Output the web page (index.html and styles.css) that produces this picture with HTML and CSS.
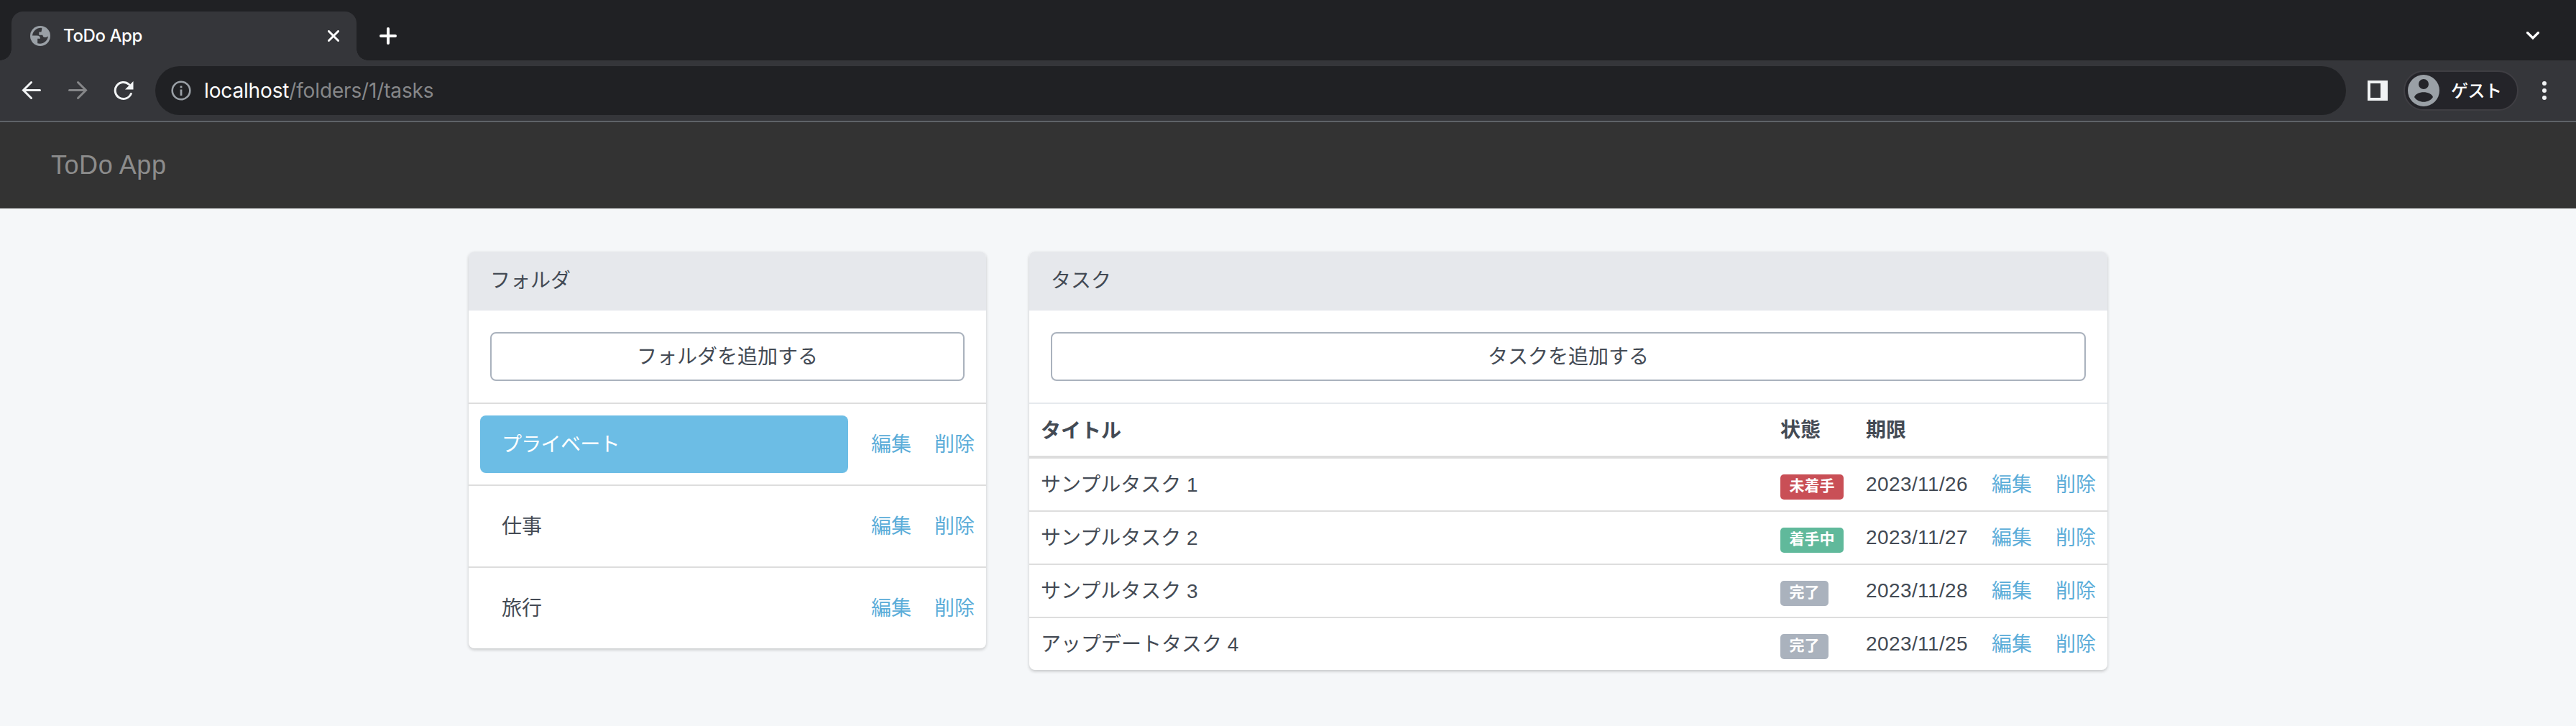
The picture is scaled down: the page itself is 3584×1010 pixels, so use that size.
FILE: index.html
```html
<!DOCTYPE html>
<html lang="ja">
<head>
<meta charset="utf-8">
<title>ToDo App</title>
<link rel="stylesheet" href="styles.css">
</head>
<body>
<header class="browser">
  <div class="tabstrip">
    <div class="tab">
      <svg class="globe" width="28" height="28" viewBox="0 0 28 28"><circle cx="14" cy="14" r="14" fill="#9aa0a6"/><path d="M16.300 3C10 2 4 6.500 3 13.500h6.500c3 0 4.500 1.500 4.500 4.300h-3.800v6.500c7 2 14-2.500 14.800-10-1 1.300-2.500 1.700-4 1.700-2.500 0-3.500-1.300-3.700-3.300h-5V8.500h3.200c.2-2 .8-2.500.8-5.500z" fill="#35363a"/></svg>
      <span class="tab-title">ToDo App</span>
      <svg class="close" width="16" height="16" viewBox="0 0 16 16"><path d="M1.500 1.500l13 13M14.500 1.500l-13 13" stroke="#fff" stroke-width="3" stroke-linecap="round"/></svg>
    </div>
    <svg class="plus" width="24" height="24" viewBox="0 0 24 24"><path d="M12 2v20M2 12h20" stroke="#fff" stroke-width="4" stroke-linecap="round"/></svg>
    <svg class="chevron" width="18" height="12" viewBox="0 0 18 12"><path d="M1.500 1.500L9 9l7.500-7.500" fill="none" stroke="#fff" stroke-width="3.200" stroke-linecap="round"/></svg>
  </div>
  <div class="toolbar">
    <svg class="nav-icon" width="28" height="28" viewBox="0 0 28 28"><path d="M25.500 13.500H3M13.500 2.500l-11 11 11 11" fill="none" stroke="#f1f3f4" stroke-width="3" stroke-linecap="round"/></svg>
    <svg class="nav-icon" width="28" height="28" viewBox="0 0 28 28"><path d="M2.500 13.500H25M14.500 2.500l11 11-11 11" fill="none" stroke="#868789" stroke-width="3" stroke-linecap="round"/></svg>
    <svg class="nav-icon" width="28" height="28" viewBox="0 0 28 28"><path d="M24.300 18.500A11.500 11.500 0 1 1 21.500 5.500" fill="none" stroke="#f1f3f4" stroke-width="3" stroke-linecap="round"/><path d="M27.500 1v11.500H16z" fill="#f1f3f4"/></svg>
    <div class="omnibox">
      <svg width="28" height="28" viewBox="0 0 28 28"><circle cx="14" cy="14" r="12.300" fill="none" stroke="#9aa0a6" stroke-width="2.600"/><path d="M12.600 12.500h2.800V21h-2.800zM12.600 7.500h2.800v2.800h-2.800z" fill="#9aa0a6"/></svg>
      <span class="url"><span class="host">localhost</span>/folders/1/tasks</span>
    </div>
    <svg class="panel-icon" width="28" height="28" viewBox="0 0 28 28"><path d="M0 0h28v28H0zM4 4v20h14V4z" fill="#f1f3f4" fill-rule="evenodd"/></svg>
    <div class="profile">
      <svg width="44" height="44" viewBox="0 0 44 44"><circle cx="22" cy="22" r="22" fill="#9aa0a6"/><circle cx="22" cy="13" r="7" fill="#242429"/><path d="M9 31c3-9 23-9 26 0-5 9-21 9-26 0z" fill="#242429"/></svg>
      <span>ゲスト</span>
    </div>
    <svg class="menu" width="6" height="26" viewBox="0 0 6 26"><g fill="#f1f3f4"><circle cx="3" cy="3" r="3"/><circle cx="3" cy="13" r="3"/><circle cx="3" cy="23" r="3"/></g></svg>
  </div>
</header>
<nav class="navbar"><a class="brand">ToDo App</a></nav>
<main class="container">
  <section class="panel folders">
    <h2 class="panel-heading">フォルダ</h2>
    <div class="panel-body"><a class="btn">フォルダを追加する</a></div>
    <div class="folder-row"><a class="folder active">プライベート</a><a class="link">編集</a><a class="link">削除</a></div>
    <div class="folder-row"><a class="folder">仕事</a><a class="link">編集</a><a class="link">削除</a></div>
    <div class="folder-row"><a class="folder">旅行</a><a class="link">編集</a><a class="link">削除</a></div>
  </section>
  <section class="panel tasks">
    <h2 class="panel-heading">タスク</h2>
    <div class="panel-body"><a class="btn">タスクを追加する</a></div>
    <div class="task-row head"><span>タイトル</span><span>状態</span><span>期限</span></div>
    <div class="task-row"><span>サンプルタスク 1</span><span><b class="label danger">未着手</b></span><span class="date">2023/11/26</span><a class="link">編集</a><a class="link">削除</a></div>
    <div class="task-row"><span>サンプルタスク 2</span><span><b class="label success">着手中</b></span><span class="date">2023/11/27</span><a class="link">編集</a><a class="link">削除</a></div>
    <div class="task-row"><span>サンプルタスク 3</span><span><b class="label">完了</b></span><span class="date">2023/11/28</span><a class="link">編集</a><a class="link">削除</a></div>
    <div class="task-row"><span>アップデートタスク 4</span><span><b class="label">完了</b></span><span class="date">2023/11/25</span><a class="link">編集</a><a class="link">削除</a></div>
  </section>
</main>
</body>
</html>
```

FILE: styles.css
```css
* { box-sizing: border-box; }
body {
  margin: 0;
  height: 1010px;
  overflow: hidden;
  background: #f5f7f9;
  color: #434a54;
  font: 28px/40px "Liberation Sans", "Noto Sans CJK JP", sans-serif;
}
svg { display: block; flex: none; }

.browser { height: 170px; background: #35363a; border-bottom: 2px solid #5f6368; font-family: Inter, "Noto Sans CJK JP", sans-serif; }
.tabstrip { height: 84px; background: #202124; display: flex; align-items: center; padding: 16px 48px 0 16px; }
.tab {
  position: relative;
  width: 480px;
  height: 68px;
  padding: 0 24px 0 26px;
  display: flex;
  align-items: center;
  background: #35363a;
  border-radius: 16px 16px 0 0;
}
.tab::before, .tab::after { content: ""; position: absolute; bottom: 0; width: 16px; height: 16px; }
.tab::before { left: -16px; background: radial-gradient(circle at 0 0, #202124 15.5px, #35363a 16px); }
.tab::after { right: -16px; background: radial-gradient(circle at 100% 0, #202124 15.5px, #35363a 16px); }
.tab-title { margin-left: 18px; color: #fff; font-size: 24px; font-weight: 500; letter-spacing: -.4px; flex: 1; }
.plus { margin-left: 32px; }
.chevron { margin-left: auto; margin-right: 3px; }

.toolbar { height: 84px; display: flex; align-items: center; padding: 0 41px 0 30px; }
.nav-icon { margin-right: 36px; }
.omnibox { flex: 1; margin-left: -6px; height: 68px; border-radius: 34px; background: #202124; display: flex; align-items: center; padding-left: 22px; }
.url { margin-left: 18px; font-size: 28px; color: #868789; letter-spacing: -.15px; }
.host { color: #fff; }
.panel-icon { margin-left: 30px; }
.profile { margin-left: 22px; width: 160px; height: 56px; border: 2px solid #3f3e43; border-radius: 28px; background: #242429; display: flex; align-items: center; padding-left: 4px; color: #fff; font-size: 24px; font-weight: 500; letter-spacing: -.5px; }
.profile span { margin-left: 16px; padding-top: 2px; }
.menu { margin-left: 33px; }

.navbar { height: 120px; background: #333; padding: 40px 71px; }
.brand { display: block; font-size: 36px; line-height: 40px; letter-spacing: .55px; color: #8c8c8c; }

.container { display: flex; align-items: flex-start; gap: 60px; width: 2280px; margin: 60px auto 0; }
.panel { background: #fff; border-radius: 8px; box-shadow: 0 2px 4px rgba(0, 0, 0, .2); overflow: hidden; }
.folders { width: 720px; }
.tasks { width: 1500px; }
.panel-heading { margin: 0; height: 82px; padding: 21px 30px 19px; background: #e6e8ec; font-size: 28px; font-weight: 400; }
.panel-body { padding: 30px; }
.btn { display: block; height: 68px; border: 2px solid #aab2bd; border-radius: 8px; text-align: center; line-height: 66px; }
.link { color: #5badd9; padding-top: 2px; }

.folder-row { height: 114px; border-top: 2px solid #ddd; display: flex; align-items: center; padding: 0 16px; }
.folder { flex: 1; height: 80px; line-height: 82px; padding-left: 30px; border-radius: 8px; }
.active { background: #6cbde5; color: #fff; letter-spacing: -.7px; }
.folder-row .link { margin-left: 32px; }

.task-row { height: 74px; border-top: 2px solid #ddd; display: grid; grid-template-columns: 1029px 119px 175px 89px 60px; align-items: center; padding-left: 16px; }
.task-row > span:first-child { padding-top: 2px; }
.head { border-top-color: #e6e9ed; font-weight: 700; padding-top: 1px; }
.head + .task-row { height: 76px; border-top-width: 4px; }
.date { letter-spacing: .4px; }
.label { display: block; width: max-content; height: 35px; margin-top: 6px; padding: 0 12px 0 12.500px; border-radius: 5px; background: #aab2bd; color: #fff; font-size: 21px; line-height: 32px; }
.danger { background: #c94f56; }
.success { background: #60b99b; }
```
